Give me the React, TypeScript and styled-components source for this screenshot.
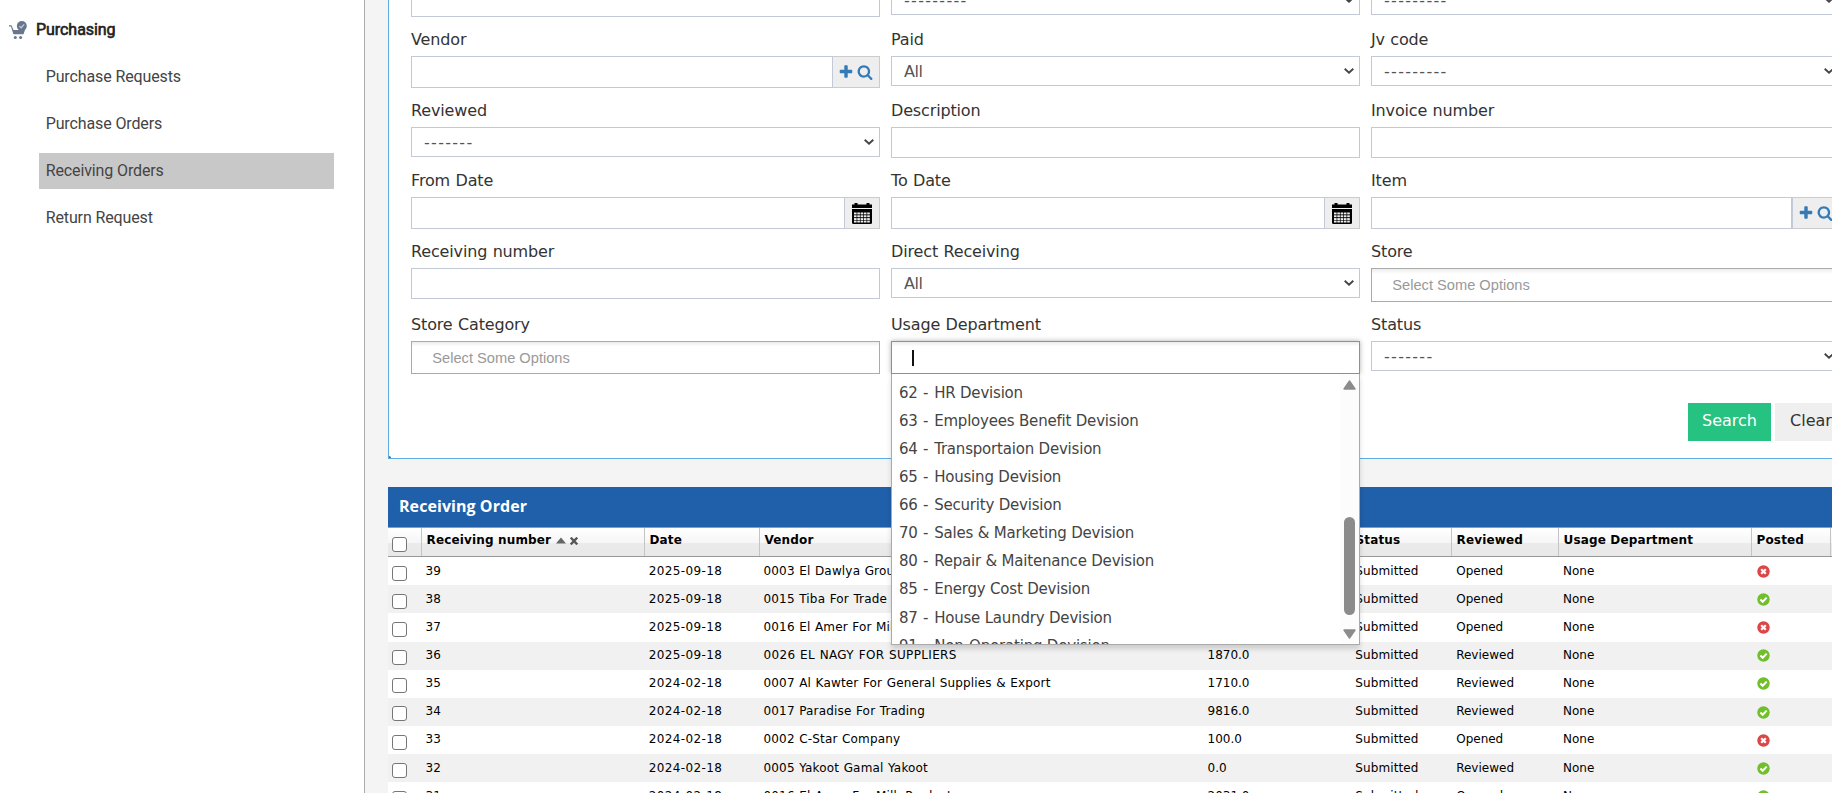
import React from "react";
import styled, { createGlobalStyle } from "styled-components";

const GlobalStyle = createGlobalStyle`
  *, *::before, *::after { box-sizing: border-box; }
  html, body { margin: 0; padding: 0; }
  body {
    width: 100vw;
    height: 100vh;
    overflow: hidden;
    background: #f4f4f4;
    color: #333;
    font: 16px "DejaVu Sans", Verdana, sans-serif;
  }
`;

const Page = styled.div`
  display: flex;
  width: 1832px;
  height: 793px;
  overflow: hidden;
`;

/* ---------- sidebar ---------- */

const Sidebar = styled.nav`
  flex: 0 0 365px;
  background: #fff;
  border-right: 1px solid #ababab;
  padding-top: 17px;
  font-family: Roboto, sans-serif;
`;

const SidebarHeading = styled.div`
  display: flex;
  align-items: center;
  gap: 9px;
  height: 26px;
  padding-left: 9px;
  margin-bottom: 16px;
  color: #212121;
  font-size: 16px;
  font-weight: 400;
  -webkit-text-stroke: 0.6px #212121;
  letter-spacing: -0.05px;
`;

const HeadingText = styled.span`
  padding-bottom: 2px;
`;

const MenuList = styled.ul`
  display: flex;
  flex-direction: column;
  gap: 11px;
  list-style: none;
  margin: 0 30px 0 39px;
  padding: 0;
`;

const MenuItem = styled.li<{ $active?: boolean }>`
  height: 36px;
  padding-left: 6.7px;
  line-height: 35px;
  font-size: 16px;
  letter-spacing: -0.12px;
  color: #444;
  background: ${(p) => (p.$active ? "#c8c8c8" : "transparent")};
`;

/* ---------- filter form ---------- */

const Main = styled.main`
  flex: 0 0 auto;
  width: 1467px;
  padding-left: 23px;
  overflow: hidden;
`;

const FilterPanel = styled.section`
  position: relative;
  height: 459px;
  width: 1480px;
  padding-left: 22px;
  background: #fff;
  border: 1px solid #5dade2;
  border-top: 0;
`;

const PanelCorner = styled.i`
  position: absolute;
  left: 0;
  bottom: 0;
  width: 2px;
  height: 2px;
  background: #2f6ea5;
  border-top-right-radius: 2px;
`;

const FieldGrid = styled.div`
  display: grid;
  grid-template-columns: repeat(3, 469px);
  grid-template-rows: 17px 71px 70px 71px 73px 72px;
  column-gap: 11px;
`;

const Field = styled.div`
  position: relative;
  display: flex;
  flex-direction: column;
`;

const ClippedField = styled(Field)<{ $lift: number }>`
  justify-content: flex-end;
  padding-bottom: ${(p) => p.$lift}px;
  height: 17px;
`;

const Label = styled.label`
  flex: 0 0 39px;
  padding-top: 12px;
  line-height: 22px;
  letter-spacing: -0.15px;
  word-spacing: 0.5px;
  color: #333;
`;

const TextInput = styled.div`
  flex: 0 0 31px;
  background: #fff;
  border: 1px solid #c2cad8;
`;

const SelectBox = styled.div`
  flex: 0 0 30px;
  display: flex;
  align-items: center;
  justify-content: space-between;
  padding: 0 5px 0 12px;
  color: #555;
  background: #fff;
  border: 1px solid #c2cad8;
`;

const SelectText = styled.span<{ $dashes?: boolean }>`
  letter-spacing: ${(p) => (p.$dashes ? "1.3px" : "-0.4px")};
`;

const InputGroup = styled.div`
  flex: 0 0 32px;
  display: flex;
`;

const GroupInput = styled.div<{ $double?: boolean }>`
  flex: 1;
  background: #fff;
  border: 1px solid #c2cad8;
  border-right-width: ${(p) => (p.$double ? 1 : 0)}px;
`;

const Addon = styled.div<{ $kind: "lookup" | "date" }>`
  flex: 0 0 ${(p) => (p.$kind === "lookup" ? 48 : 36)}px;
  display: flex;
  align-items: center;
  justify-content: center;
  gap: 3px;
  padding: ${(p) => (p.$kind === "lookup" ? "0 1px 0 0" : "1px 0 0")};
  background: #eee;
  border: 1px solid #ccc;
  border-left-color: #c2cad8;
  color: #337ab7;
`;

const Chosen = styled.div<{ $h: number; $active?: boolean }>`
  flex: 0 0 ${(p) => p.$h}px;
  display: flex;
  align-items: center;
  padding-left: 20.3px;
  color: #999;
  font: 14.65px "Liberation Sans", Arial, sans-serif;
  background: linear-gradient(#eee 1%, #fff 15%) #fff;
  border: 1px solid ${(p) => (p.$active ? "#5897fb" : "#aaa")};
  box-shadow: ${(p) => (p.$active ? "0 0 5px rgba(0, 0, 0, 0.3)" : "none")};
`;

const Caret = styled.i`
  width: 2px;
  height: 16px;
  background: #111;
`;

const Dropdown = styled.div`
  position: absolute;
  z-index: 5;
  top: 72px;
  left: 0;
  display: flex;
  width: 469px;
  height: 271px;
  background: #fff;
  border: 1px solid #aaa;
  border-top: 0;
  box-shadow: 0 4px 5px rgba(0, 0, 0, 0.15);
  overflow: hidden;
`;

const OptionList = styled.ul`
  flex: 1;
  list-style: none;
  margin: 0;
  padding: 4.75px 0 0 7px;
`;

const Option = styled.li`
  height: 28.1px;
  line-height: 28px;
  font-size: 15px;
  letter-spacing: -0.2px;
  color: #444;
  white-space: nowrap;
`;

const OptionDash = styled.span`
  letter-spacing: 0.5px;
`;

const ScrollTrack = styled.div`
  flex: 0 0 19px;
  display: flex;
  flex-direction: column;
  align-items: center;
  padding-top: 6px;
  background: #fcfcfc;
`;

const ScrollThumb = styled.div`
  width: 11px;
  height: 98px;
  margin: 127px 0 14px;
  border-radius: 6px;
  background: #8b8b8b;
`;

const Buttons = styled.div`
  display: flex;
  gap: 4px;
  margin: 29px 0 0 1277px;
`;

const Button = styled.button<{ $primary?: boolean }>`
  width: ${(p) => (p.$primary ? 83 : 72)}px;
  flex: none;
  height: 38px;
  border: 0;
  padding: 0 0 3px;
  font: 16px "DejaVu Sans", Verdana, sans-serif;
  color: ${(p) => (p.$primary ? "#fff" : "#333")};
  background: ${(p) => (p.$primary ? "#26c281" : "#efefef")};
`;

/* ---------- results table ---------- */

const Results = styled.section`
  margin-top: 28px;
  width: 1460px;
  color: #000;
  font-size: 12px;
`;

const TitleBar = styled.h2`
  height: 40px;
  margin: 0;
  padding-left: 11px;
  background: #205fa9;
  color: #fff;
  font: bold 16px/39px "Open Sans", sans-serif;
  letter-spacing: 0.06px;
`;

const columns = "34px 223px 115px 444px 147px 101px 107px 193px 79px 17px";

const HeadRow = styled.div`
  display: grid;
  grid-template-columns: ${columns};
  height: 30.2px;
  border-top: 1px solid #999;
  border-bottom: 1px solid #999;
  background: linear-gradient(#fff 0, #f6f6f6 53%, #ebebeb 54%, #e8e8e8 100%);
  font-weight: bold;
`;

const HeadCell = styled.div`
  display: flex;
  align-items: flex-start;
  padding: 5px 0 0 4.5px;
  line-height: 15px;
  letter-spacing: 0.15px;
  border-right: 1px solid #c4c4c4;
  white-space: nowrap;
`;

const HeadCheck = styled(HeadCell)`
  padding: 9px 0 0 4px;
`;

const SortIcons = styled.span`
  display: flex;
  gap: 4px;
  padding: 4px 0 0 5px;
`;

const Row = styled.div<{ $odd: boolean }>`
  display: grid;
  grid-template-columns: ${columns};
  height: 28.13px;
  background: ${(p) => (p.$odd ? "#f1f1f1" : "#fff")};
`;

const Cell = styled.div<{ $spacing?: number; $inset?: number }>`
  padding: 6.45px 0 0 ${(p) => p.$inset ?? 3.5}px;
  line-height: 15px;
  letter-spacing: ${(p) => p.$spacing ?? 0}px;
  white-space: nowrap;
`;

const VendorCell = styled(Cell)`
  word-spacing: 0.5px;
`;

const CheckCell = styled.div`
  padding: 8.6px 0 0 4px;
`;

const CheckBox = styled.div`
  width: 15px;
  height: 15px;
  border: 1.4px solid #767676;
  border-radius: 3px;
  background: #fff;
`;

const StateCell = styled.div`
  padding: 7.7px 0 0 4.5px;
  line-height: 0;
`;

/* ---------- icons ---------- */

const CartIcon = () => (
  <svg width="18" height="18" viewBox="0 0 18 18" fill="#68778d">
    <path d="M0 4.2h2.5l2 4.9h8.2c1.6 0 2.8-.3 3.6-1l-1.8 5.2H4.4L2 5.6H0z" />
    <circle cx="12.8" cy="5" r="5" />
    <path d="M10.4 5.1l1.7 1.7 3.1-3.4" fill="none" stroke="#c3cad4" strokeWidth="1.3" />
    <circle cx="6.3" cy="16.4" r="1.5" />
    <circle cx="11.6" cy="16.4" r="1.5" />
  </svg>
);

const PlusIcon = () => (
  <svg width="16" height="16" viewBox="0 0 1792 1792" fill="currentColor">
    <path d="M1600 736v192q0 40-28 68t-68 28h-416v416q0 40-28 68t-68 28h-192q-40 0-68-28t-28-68v-416h-416q-40 0-68-28t-28-68v-192q0-40 28-68t68-28h416v-416q0-40 28-68t68-28h192q40 0 68 28t28 68v416h416q40 0 68 28t28 68z" />
  </svg>
);

const SearchIcon = () => (
  <svg width="16" height="16" viewBox="0 0 1792 1792" fill="currentColor">
    <path d="M1216 832q0-185-131.5-316.5t-316.5-131.5-316.5 131.5-131.5 316.5 131.5 316.5 316.5 131.5 316.5-131.5 131.5-316.5zm512 832q0 52-38 90t-90 38q-54 0-90-38l-343-342q-179 124-399 124-143 0-273.5-55.5t-225-150-150-225-55.5-273.5 55.5-273.5 150-225 225-150 273.5-55.5 273.5 55.5 225 150 150 225 55.5 273.5q0 220-124 399l343 343q37 37 37 90z" />
  </svg>
);

const CalendarIcon = () => (
  <svg width="20" height="21" viewBox="0 0 20 21">
    <path d="M0 1.5h2.5V0h3v1.5h9V0h3v1.5H20V5H0z" fill="#000" />
    <path d="M0 6h20v13.5a1.5 1.5 0 0 1-1.5 1.5h-17A1.5 1.5 0 0 1 0 19.5z" fill="#000" />
    {[9.5, 12.3, 15.1, 17.6].map((y) =>
      [2, 5.3, 8.6, 11.9, 15.2].map((x) => (
        <rect key={`${x}-${y}`} x={x} y={y} width="2.6" height="1.9" fill="#eee" />
      ))
    )}
  </svg>
);

const Chevron = () => (
  <svg width="10" height="6" viewBox="0 0 10 6">
    <path d="M.7.8L5 4.7 9.3.8" fill="none" stroke="#444" strokeWidth="1.9" />
  </svg>
);

const ScrollArrow = ({ down }: { down?: boolean }) => (
  <svg width="13" height="10" viewBox="0 0 13 10">
    <path
      d={down ? "M1 1h11L6.5 9z" : "M1 9h11L6.5 1z"}
      fill="#8b8b8b"
      stroke="#8b8b8b"
      strokeWidth="1.4"
      strokeLinejoin="round"
    />
  </svg>
);

const PostedIcon = ({ ok }: { ok: boolean }) => (
  <svg width="13" height="13" viewBox="0 0 13 13">
    <circle cx="6.5" cy="6.5" r="6.2" fill={ok ? "#70bf2b" : "#dd4646"} />
    {ok ? (
      <path d="M3.4 6.5l2.3 2.3 4-4.2" fill="none" stroke="#fff" strokeWidth="2" />
    ) : (
      <path d="M4.2 4.2l4.6 4.6M8.8 4.2L4.2 8.8" stroke="#fff" strokeWidth="2.2" />
    )}
  </svg>
);

/* ---------- data ---------- */

const options = [
  ["62", "HR Devision"],
  ["63", "Employees Benefit Devision"],
  ["64", "Transportaion Devision"],
  ["65", "Housing Devision"],
  ["66", "Security Devision"],
  ["70", "Sales & Marketing Devision"],
  ["80", "Repair & Maitenance Devision"],
  ["85", "Energy Cost Devision"],
  ["87", "House Laundry Devision"],
  ["91", "Non-Operating Devision"],
];

type Order = [string, string, string, string, string, boolean];

const orders: Order[] = [
  ["39", "2025-09-18", "0003 El Dawlya Group", "", "Opened", false],
  ["38", "2025-09-18", "0015 Tiba For Trade", "", "Opened", true],
  ["37", "2025-09-18", "0016 El Amer For Milk Products", "", "Opened", false],
  ["36", "2025-09-18", "0026 EL NAGY FOR SUPPLIERS", "1870.0", "Reviewed", true],
  ["35", "2024-02-18", "0007 Al Kawter For General Supplies & Export", "1710.0", "Reviewed", true],
  ["34", "2024-02-18", "0017 Paradise For Trading", "9816.0", "Reviewed", true],
  ["33", "2024-02-18", "0002 C-Star Company", "100.0", "Opened", false],
  ["32", "2024-02-18", "0005 Yakoot Gamal Yakoot", "0.0", "Reviewed", true],
  ["31", "2024-02-18", "0016 El Amer For Milk Products", "2031.0", "Opened", true],
];

const Select = ({ value }: { value: string }) => (
  <SelectBox>
    <SelectText $dashes={value.startsWith("-")}>{value}</SelectText>
    <Chevron />
  </SelectBox>
);

const Lookup = ({ double }: { double?: boolean }) => (
  <InputGroup>
    <GroupInput $double={double} />
    <Addon $kind="lookup">
      <PlusIcon />
      <SearchIcon />
    </Addon>
  </InputGroup>
);

const DateInput = () => (
  <InputGroup>
    <GroupInput />
    <Addon $kind="date">
      <CalendarIcon />
    </Addon>
  </InputGroup>
);

export default function App() {
  return (
    <>
      <GlobalStyle />
      <Page>
        <Sidebar>
          <SidebarHeading>
            <CartIcon />
            <HeadingText>Purchasing</HeadingText>
          </SidebarHeading>
          <MenuList>
            <MenuItem>Purchase Requests</MenuItem>
            <MenuItem>Purchase Orders</MenuItem>
            <MenuItem $active>Receiving Orders</MenuItem>
            <MenuItem>Return Request</MenuItem>
          </MenuList>
        </Sidebar>
        <Main>
          <FilterPanel>
            <FieldGrid>
              <ClippedField $lift={0}>
                <TextInput />
              </ClippedField>
              <ClippedField $lift={2}>
                <Select value="---------" />
              </ClippedField>
              <ClippedField $lift={2}>
                <Select value="---------" />
              </ClippedField>

              <Field>
                <Label>Vendor</Label>
                <Lookup />
              </Field>
              <Field>
                <Label>Paid</Label>
                <Select value="All" />
              </Field>
              <Field>
                <Label>Jv code</Label>
                <Select value="---------" />
              </Field>

              <Field>
                <Label>Reviewed</Label>
                <Select value="-------" />
              </Field>
              <Field>
                <Label>Description</Label>
                <TextInput />
              </Field>
              <Field>
                <Label>Invoice number</Label>
                <TextInput />
              </Field>

              <Field>
                <Label>From Date</Label>
                <DateInput />
              </Field>
              <Field>
                <Label>To Date</Label>
                <DateInput />
              </Field>
              <Field>
                <Label>Item</Label>
                <Lookup double />
              </Field>

              <Field>
                <Label>Receiving number</Label>
                <TextInput />
              </Field>
              <Field>
                <Label>Direct Receiving</Label>
                <Select value="All" />
              </Field>
              <Field>
                <Label>Store</Label>
                <Chosen $h={34}>Select Some Options</Chosen>
              </Field>

              <Field>
                <Label>Store Category</Label>
                <Chosen $h={33}>Select Some Options</Chosen>
              </Field>
              <Field>
                <Label>Usage Department</Label>
                <Chosen $h={33} $active>
                  <Caret />
                </Chosen>
                <Dropdown>
                  <OptionList>
                    {options.map(([code, name]) => (
                      <Option key={code}>
                        {code}
                        <OptionDash> - </OptionDash>
                        {name}
                      </Option>
                    ))}
                  </OptionList>
                  <ScrollTrack>
                    <ScrollArrow />
                    <ScrollThumb />
                    <ScrollArrow down />
                  </ScrollTrack>
                </Dropdown>
              </Field>
              <Field>
                <Label>Status</Label>
                <Select value="-------" />
              </Field>
            </FieldGrid>
            <Buttons>
              <Button $primary>Search</Button>
              <Button>Clear</Button>
            </Buttons>
            <PanelCorner />
          </FilterPanel>

          <Results>
            <TitleBar>Receiving Order</TitleBar>
            <HeadRow>
              <HeadCheck>
                <CheckBox />
              </HeadCheck>
              <HeadCell>
                Receiving number
                <SortIcons>
                  <svg width="10" height="7" viewBox="0 0 10 7">
                    <path d="M0 6.5L5 .5l5 6z" fill="#666" />
                  </svg>
                  <svg width="8" height="8" viewBox="0 0 8 8">
                    <path d="M.8.6l6.400 6.800M7.200.6L.8 7.400" stroke="#555" strokeWidth="2.300" />
                  </svg>
                </SortIcons>
              </HeadCell>
              <HeadCell>Date</HeadCell>
              <HeadCell>Vendor</HeadCell>
              <HeadCell />
              <HeadCell>Status</HeadCell>
              <HeadCell>Reviewed</HeadCell>
              <HeadCell>Usage Department</HeadCell>
              <HeadCell>Posted</HeadCell>
              <HeadCell />
            </HeadRow>
            {orders.map(([no, date, vendor, total, reviewed, posted], i) => (
              <Row key={no} $odd={i % 2 === 1}>
                <CheckCell>
                  <CheckBox />
                </CheckCell>
                <Cell>{no}</Cell>
                <Cell $spacing={0.36} $inset={3.8}>{date}</Cell>
                <VendorCell $spacing={/[a-z]/.test(vendor) ? 0.17 : 0.34}>{vendor}</VendorCell>
                <Cell>{total}</Cell>
                <Cell $spacing={0.1} $inset={4.3}>Submitted</Cell>
                <Cell $inset={4.2}>{reviewed}</Cell>
                <Cell $inset={4}>None</Cell>
                <StateCell>
                  <PostedIcon ok={posted} />
                </StateCell>
              </Row>
            ))}
          </Results>
        </Main>
      </Page>
    </>
  );
}
